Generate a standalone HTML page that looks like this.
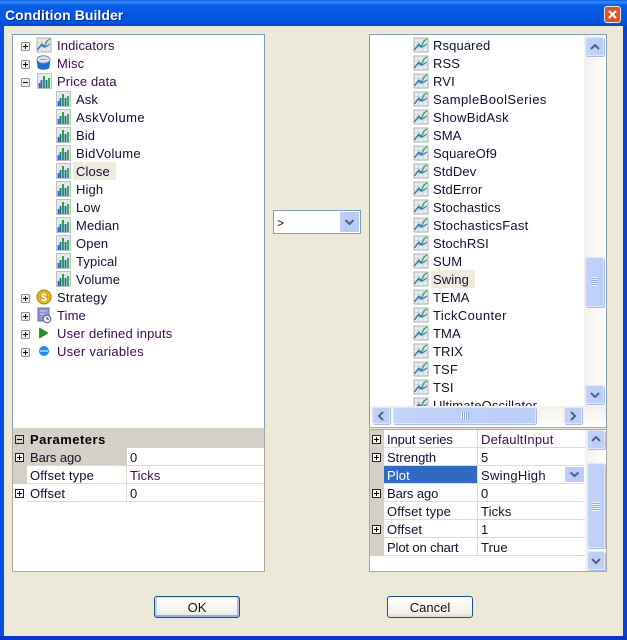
<!DOCTYPE html>
<html><head><meta charset="utf-8"><style>
html,body{margin:0;padding:0;width:627px;height:640px;overflow:hidden;background:#ECE9D8}
body{position:relative;font:13px/18px "Liberation Sans",sans-serif;color:#101030}
.a,.t,.e,.i,.sb,.ar{position:absolute}
.t{white-space:nowrap;height:18px;line-height:18px;letter-spacing:.12px;margin-top:1px}
.sb{border-radius:2px;background:linear-gradient(90deg,#c4d2f8,#bccdf8);border:1px solid #dde6fb;box-sizing:border-box;box-shadow:1px 1px 0 #a9bce8}
.ar{stroke:#4d6185;stroke-width:2;fill:none}
.l{position:absolute;background:#dfdccb;height:1px}
.v{position:absolute;background:#dfdccb;width:1px}
</style></head><body>
<svg width="0" height="0" style="position:absolute"><defs>
<g id="p"><rect x=".5" y=".5" width="8" height="8" rx="1" fill="#eeeee6" stroke="#94948a"/><path d="M2 4.500h5M4.500 2v5" stroke="#111"/></g>
<g id="m"><rect x=".5" y=".5" width="8" height="8" rx="1" fill="#eeeee6" stroke="#94948a"/><path d="M2 4.500h5" stroke="#111"/></g>
<g id="gp"><rect x=".5" y=".5" width="8" height="8" fill="#fff" stroke="#222"/><path d="M2 4.500h5M4.500 2v5" stroke="#000"/></g>
<g id="gm"><rect x=".5" y=".5" width="8" height="8" fill="none" stroke="#222"/><path d="M2 4.500h5" stroke="#000"/></g>
<g id="line"><rect x="1" y="1" width="14" height="14" fill="#ececec" stroke="#a8afb4"/><path d="M5.500 1v14M10 1v14M1 5.500h14M1 10h14" stroke="#cfd2d4"/><path d="M2 12L5 8l3 2 3-6 3-2" fill="none" stroke="#2aa548" stroke-width="1.300"/><path d="M1.500 13L6 7l3 3 5-3" fill="none" stroke="#3a73d4" stroke-width="1.200"/></g>
<g id="bar"><rect x=".5" y=".5" width="14" height="15" fill="#e6e9ec" stroke="#bcc3c8"/><path d="M2.500 15V10M4.500 15V7" stroke="#2563c8" stroke-width="1.800"/><path d="M7 15V3" stroke="#2aa638" stroke-width="2"/><path d="M9.500 15V7" stroke="#2563c8" stroke-width="1.800"/><path d="M12 15V5" stroke="#35b045" stroke-width="2"/></g>
<g id="misc"><path d="M1 5l1 8q5.500 3 11 0l1-8z" fill="#1a70cf" stroke="#155aa5" stroke-width=".6"/><ellipse cx="7.500" cy="4.500" rx="6.500" ry="3.800" fill="#dfe6ee" stroke="#70869c"/><path d="M4 4.500h7" stroke="#9aa8b6"/></g>
<g id="coin"><circle cx="8" cy="8" r="7" fill="#e9b81c" stroke="#a97c10"/><circle cx="8" cy="8" r="4.500" fill="#dda018"/><text x="8" y="12" font-size="11" font-weight="bold" text-anchor="middle" fill="#fff" font-family="Liberation Sans">$</text></g>
<g id="time"><rect x="2" y="1" width="11" height="13" fill="#8f94d0" stroke="#6a70aa"/><path d="M4 4h7M4 7h5" stroke="#c8cbe8"/><circle cx="11" cy="12" r="3.800" fill="#eef1f4" stroke="#4f5c78"/><path d="M11 10v2h2" stroke="#333" fill="none"/></g>
<g id="play"><path d="M3.500 3l8.500 5-8.500 5z" fill="#1b9a1b" stroke="#0f6a0f" stroke-width=".6"/></g>
<g id="ball"><circle cx="8" cy="8" r="5" fill="#1e90ee"/><path d="M4 8h8" stroke="#8cc6f6" stroke-width="2"/></g>
</defs></svg>

<!-- window frame -->
<div class="a" style="left:0;top:0;width:627px;height:26px;background:linear-gradient(180deg,#0a5ae6 0,#3a8cf6 2px,#0a5fe8 5px,#0358e0 14px,#0454e4 22px,#0348c8 26px)"></div>
<div class="a" style="left:0;top:26px;width:4px;height:614px;background:#0a4be0"></div>
<div class="a" style="left:623px;top:26px;width:4px;height:614px;background:#0a3fd8"></div>
<div class="a" style="left:0;top:636px;width:627px;height:4px;background:#0a35c8"></div>
<div class="a" style="left:5px;top:6px;color:#fff;font:bold 14px/18px 'Liberation Sans',sans-serif;text-shadow:1px 1px #0a2a90;letter-spacing:.05px">Condition Builder</div>
<div class="a" style="left:604px;top:6px;width:17px;height:17px;box-sizing:border-box;background:#d9552f;border:1px solid #f2e4dc;border-radius:3px"><svg width="15" height="15" style="display:block"><path d="M4 4l7 7M11 4l-7 7" stroke="#fff" stroke-width="2.200"/></svg></div>

<!-- left tree panel -->
<div class="a" style="left:12px;top:34px;width:253px;height:394px;box-sizing:border-box;background:#fff;border:1px solid #7f9db9;border-bottom:0"></div>
<div class="a" style="left:73px;top:162px;width:43px;height:18px;background:#EFEBDE"></div>
<svg class="a" style="left:0;top:0" width="627" height="640">
<use href="#p" x="21" y="42"/><use href="#p" x="21" y="60"/><use href="#m" x="21" y="78"/>
<use href="#p" x="21" y="294"/><use href="#p" x="21" y="312"/><use href="#p" x="21" y="330"/><use href="#p" x="21" y="348"/>
<use href="#line" x="36" y="37"/><use href="#misc" x="36" y="55"/><use href="#bar" x="37" y="73"/>
<use href="#bar" x="56" y="91"/><use href="#bar" x="56" y="109"/><use href="#bar" x="56" y="127"/><use href="#bar" x="56" y="145"/><use href="#bar" x="56" y="163"/><use href="#bar" x="56" y="181"/><use href="#bar" x="56" y="199"/><use href="#bar" x="56" y="217"/><use href="#bar" x="56" y="235"/><use href="#bar" x="56" y="253"/><use href="#bar" x="56" y="271"/>
<use href="#coin" x="36" y="289"/><use href="#time" x="36" y="307"/><use href="#play" x="36" y="325"/><use href="#ball" x="36" y="343"/>
</svg>
<div class="t" style="left:57px;top:36px;color:#3a0a50">Indicators</div>
<div class="t" style="left:57px;top:54px;color:#3a0a50">Misc</div>
<div class="t" style="left:57px;top:72px;color:#3a0a50">Price data</div>
<div class="t" style="left:76px;top:90px">Ask</div>
<div class="t" style="left:76px;top:108px;letter-spacing:.45px">AskVolume</div>
<div class="t" style="left:76px;top:126px">Bid</div>
<div class="t" style="left:76px;top:144px;letter-spacing:.3px">BidVolume</div>
<div class="t" style="left:76px;top:162px">Close</div>
<div class="t" style="left:76px;top:180px">High</div>
<div class="t" style="left:76px;top:198px">Low</div>
<div class="t" style="left:76px;top:216px">Median</div>
<div class="t" style="left:76px;top:234px">Open</div>
<div class="t" style="left:76px;top:252px">Typical</div>
<div class="t" style="left:76px;top:270px">Volume</div>
<div class="t" style="left:57px;top:288px;letter-spacing:.25px">Strategy</div>
<div class="t" style="left:57px;top:306px;color:#3a0a50">Time</div>
<div class="t" style="left:57px;top:324px;color:#3a0a50;letter-spacing:.18px">User defined inputs</div>
<div class="t" style="left:57px;top:342px;color:#3a0a50;letter-spacing:.27px">User variables</div>

<!-- left parameter grid -->
<div class="a" style="left:12px;top:428px;width:253px;height:144px;box-sizing:border-box;background:#fff;border:1px solid #aca899;border-top:0"></div>
<div class="a" style="left:13px;top:428px;width:251px;height:20px;background:#D4D0C8"></div>
<div class="a" style="left:13px;top:448px;width:14px;height:36px;background:#D4D0C8"></div>
<div class="a" style="left:27px;top:448px;width:100px;height:18px;background:#D4D0C8"></div>
<div class="l" style="left:27px;top:465px;width:237px"></div>
<div class="l" style="left:27px;top:483px;width:237px"></div>
<div class="l" style="left:27px;top:501px;width:237px"></div>
<div class="v" style="left:126px;top:466px;height:36px"></div>
<svg class="a" style="left:0;top:0" width="627" height="640"><use href="#gm" x="15" y="435"/><use href="#gp" x="15" y="453"/><use href="#gp" x="15" y="489"/></svg>
<div class="t" style="left:30px;top:430px;font-weight:bold;color:#000;letter-spacing:.5px">Parameters</div>
<div class="t" style="left:30px;top:448px;letter-spacing:-.1px">Bars ago</div><div class="t" style="left:130px;top:448px">0</div>
<div class="t" style="left:30px;top:466px">Offset type</div><div class="t" style="left:130px;top:466px;color:#3a0a50">Ticks</div>
<div class="t" style="left:30px;top:484px">Offset</div><div class="t" style="left:130px;top:484px">0</div>

<!-- combo -->
<div class="a" style="left:273px;top:210px;width:88px;height:24px;box-sizing:border-box;background:#fff;border:1px solid #7f9db9"></div>
<div class="a" style="left:340px;top:212px;width:19px;height:20px;background:#BCCDF5"><svg width="19" height="20" style="display:block"><path d="M5.500 8l4 4 4-4" fill="none" stroke="#4d6185" stroke-width="2"/></svg></div>
<div class="t" style="left:277px;top:213px;color:#111;font-size:12px">&gt;</div>

<!-- right list panel -->
<div class="a" style="left:369px;top:34px;width:238px;height:394px;box-sizing:border-box;background:#fff;border:1px solid #7f9db9;border-bottom:1px solid #aca899"></div>
<div class="a" style="left:584px;top:35px;width:22px;height:371px;background:linear-gradient(90deg,#f3f1ec,#fdfdfa)"></div>
<div class="a" style="left:370px;top:406px;width:236px;height:21px;background:linear-gradient(180deg,#f3f1ec,#fdfdfa)"></div>
<div class="a" style="left:431px;top:270px;width:44px;height:18px;background:#EFEBDE"></div>
<svg class="a" style="left:0;top:0" width="627" height="640">
<use href="#line" x="413" y="37"/><use href="#line" x="413" y="55"/><use href="#line" x="413" y="73"/><use href="#line" x="413" y="91"/><use href="#line" x="413" y="109"/><use href="#line" x="413" y="127"/><use href="#line" x="413" y="145"/><use href="#line" x="413" y="163"/><use href="#line" x="413" y="181"/><use href="#line" x="413" y="199"/><use href="#line" x="413" y="217"/><use href="#line" x="413" y="235"/><use href="#line" x="413" y="253"/><use href="#line" x="413" y="271"/><use href="#line" x="413" y="289"/><use href="#line" x="413" y="307"/><use href="#line" x="413" y="325"/><use href="#line" x="413" y="343"/><use href="#line" x="413" y="361"/><use href="#line" x="413" y="379"/>
</svg>
<div class="t" style="left:433px;top:36px">Rsquared</div>
<div class="t" style="left:433px;top:54px">RSS</div>
<div class="t" style="left:433px;top:72px">RVI</div>
<div class="t" style="left:433px;top:90px;letter-spacing:.43px">SampleBoolSeries</div>
<div class="t" style="left:433px;top:108px;letter-spacing:.3px">ShowBidAsk</div>
<div class="t" style="left:433px;top:126px">SMA</div>
<div class="t" style="left:433px;top:144px">SquareOf9</div>
<div class="t" style="left:433px;top:162px">StdDev</div>
<div class="t" style="left:433px;top:180px">StdError</div>
<div class="t" style="left:433px;top:198px">Stochastics</div>
<div class="t" style="left:433px;top:216px;letter-spacing:.25px">StochasticsFast</div>
<div class="t" style="left:433px;top:234px">StochRSI</div>
<div class="t" style="left:433px;top:252px">SUM</div>
<div class="t" style="left:433px;top:270px">Swing</div>
<div class="t" style="left:433px;top:288px">TEMA</div>
<div class="t" style="left:433px;top:306px;letter-spacing:.38px">TickCounter</div>
<div class="t" style="left:433px;top:324px">TMA</div>
<div class="t" style="left:433px;top:342px">TRIX</div>
<div class="t" style="left:433px;top:360px">TSF</div>
<div class="t" style="left:433px;top:378px">TSI</div>
<div class="a" style="left:370px;top:396px;width:214px;height:10px;overflow:hidden"><svg width="40" height="16" class="a" style="left:43px;top:1px"><use href="#line" y="0"/></svg><div class="t" style="left:63px;top:0">UltimateOscillator</div></div>

<!-- right scrollbars -->
<div class="sb" style="left:585px;top:37px;width:19px;height:19px"></div>
<svg class="ar" style="left:590px;top:44px" width="10" height="6"><path d="M1 5l4-4 4 4"/></svg>
<div class="sb" style="left:585px;top:257px;width:19px;height:50px"></div>
<div class="a" style="left:591px;top:277px;width:7px;height:9px;background:repeating-linear-gradient(180deg,#eef3ff 0 1px,#8ea8e0 1px 2px)"></div>
<div class="sb" style="left:585px;top:385px;width:19px;height:19px"></div>
<svg class="ar" style="left:590px;top:392px" width="10" height="6"><path d="M1 1l4 4 4-4"/></svg>
<div class="sb" style="left:372px;top:407px;width:18px;height:17px"></div>
<svg class="ar" style="left:378px;top:411px" width="6" height="10"><path d="M5 1L1 5l4 4"/></svg>
<div class="sb" style="left:393px;top:407px;width:143px;height:17px"></div>
<div class="a" style="left:461px;top:412px;width:8px;height:7px;background:repeating-linear-gradient(90deg,#eef3ff 0 1px,#8ea8e0 1px 2px)"></div>
<div class="sb" style="left:564px;top:407px;width:18px;height:17px"></div>
<svg class="ar" style="left:570px;top:411px" width="6" height="10"><path d="M1 1l4 4-4 4"/></svg>

<!-- right parameter grid -->
<div class="a" style="left:369px;top:429px;width:238px;height:143px;box-sizing:border-box;background:#fff;border:1px solid #aca899;border-top:0"></div>
<div class="a" style="left:370px;top:430px;width:14px;height:126px;background:#D4D0C8"></div>
<div class="a" style="left:370px;top:429px;width:236px;height:1px;background:#aca899"></div>
<div class="l" style="left:384px;top:447px;width:201px"></div>
<div class="l" style="left:384px;top:465px;width:201px"></div>
<div class="l" style="left:384px;top:483px;width:201px"></div>
<div class="l" style="left:384px;top:501px;width:201px"></div>
<div class="l" style="left:384px;top:519px;width:201px"></div>
<div class="l" style="left:384px;top:537px;width:201px"></div>
<div class="l" style="left:384px;top:555px;width:201px"></div>
<div class="v" style="left:477px;top:430px;height:126px"></div>
<div class="a" style="left:384px;top:466px;width:93px;height:17px;background:#316AC5"></div>
<div class="a" style="left:565px;top:467px;width:19px;height:15px;background:#BCCDF5"><svg width="19" height="15" style="display:block"><path d="M5.500 5.500l4 3.500 4-3.500" fill="none" stroke="#4d6185" stroke-width="2"/></svg></div>
<svg class="a" style="left:0;top:0" width="627" height="640"><use href="#gp" x="372" y="435"/><use href="#gp" x="372" y="453"/><use href="#gp" x="372" y="489"/><use href="#gp" x="372" y="525"/></svg>
<div class="t" style="left:387px;top:430px;letter-spacing:-.12px">Input series</div><div class="t" style="left:481px;top:430px;color:#3a0a50;letter-spacing:.2px">DefaultInput</div>
<div class="t" style="left:387px;top:448px;letter-spacing:0">Strength</div><div class="t" style="left:481px;top:448px">5</div>
<div class="t" style="left:387px;top:466px;color:#fff">Plot</div><div class="t" style="left:481px;top:466px;letter-spacing:.3px">SwingHigh</div>
<div class="t" style="left:387px;top:484px;letter-spacing:-.1px">Bars ago</div><div class="t" style="left:481px;top:484px">0</div>
<div class="t" style="left:387px;top:502px">Offset type</div><div class="t" style="left:481px;top:502px">Ticks</div>
<div class="t" style="left:387px;top:520px">Offset</div><div class="t" style="left:481px;top:520px">1</div>
<div class="t" style="left:387px;top:538px;letter-spacing:-.12px">Plot on chart</div><div class="t" style="left:481px;top:538px">True</div>
<div class="a" style="left:585px;top:430px;width:21px;height:141px;background:linear-gradient(90deg,#f3f1ec,#fdfdfa)"></div>
<div class="sb" style="left:587px;top:430px;width:18px;height:19px"></div>
<svg class="ar" style="left:591px;top:436px" width="10" height="6"><path d="M1 5l4-4 4 4"/></svg>
<div class="sb" style="left:587px;top:463px;width:18px;height:85px"></div>
<div class="a" style="left:592px;top:502px;width:7px;height:9px;background:repeating-linear-gradient(180deg,#eef3ff 0 1px,#8ea8e0 1px 2px)"></div>
<div class="sb" style="left:587px;top:551px;width:18px;height:19px"></div>
<svg class="ar" style="left:591px;top:558px" width="10" height="6"><path d="M1 1l4 4 4-4"/></svg>

<!-- buttons -->
<div class="a" style="left:154px;top:596px;width:86px;height:22px;box-sizing:border-box;border:1px solid #1c4f88;border-radius:3px;background:linear-gradient(180deg,#fff,#f2f1ea 80%,#e2dfd4);box-shadow:inset 0 -2px 0 #8db0e8,inset 2px 0 0 #c4d6f4,inset -2px 0 0 #a8c2ee,inset 0 1px 0 #dbe6f8;text-align:center;line-height:21px;font-size:13px;color:#111">OK</div>
<div class="a" style="left:387px;top:596px;width:86px;height:22px;box-sizing:border-box;border:1px solid #1c4f88;border-radius:3px;background:linear-gradient(180deg,#fff,#f2f1ea 80%,#dcd8cc);text-align:center;line-height:21px;font-size:13px;color:#111">Cancel</div>
</body></html>
